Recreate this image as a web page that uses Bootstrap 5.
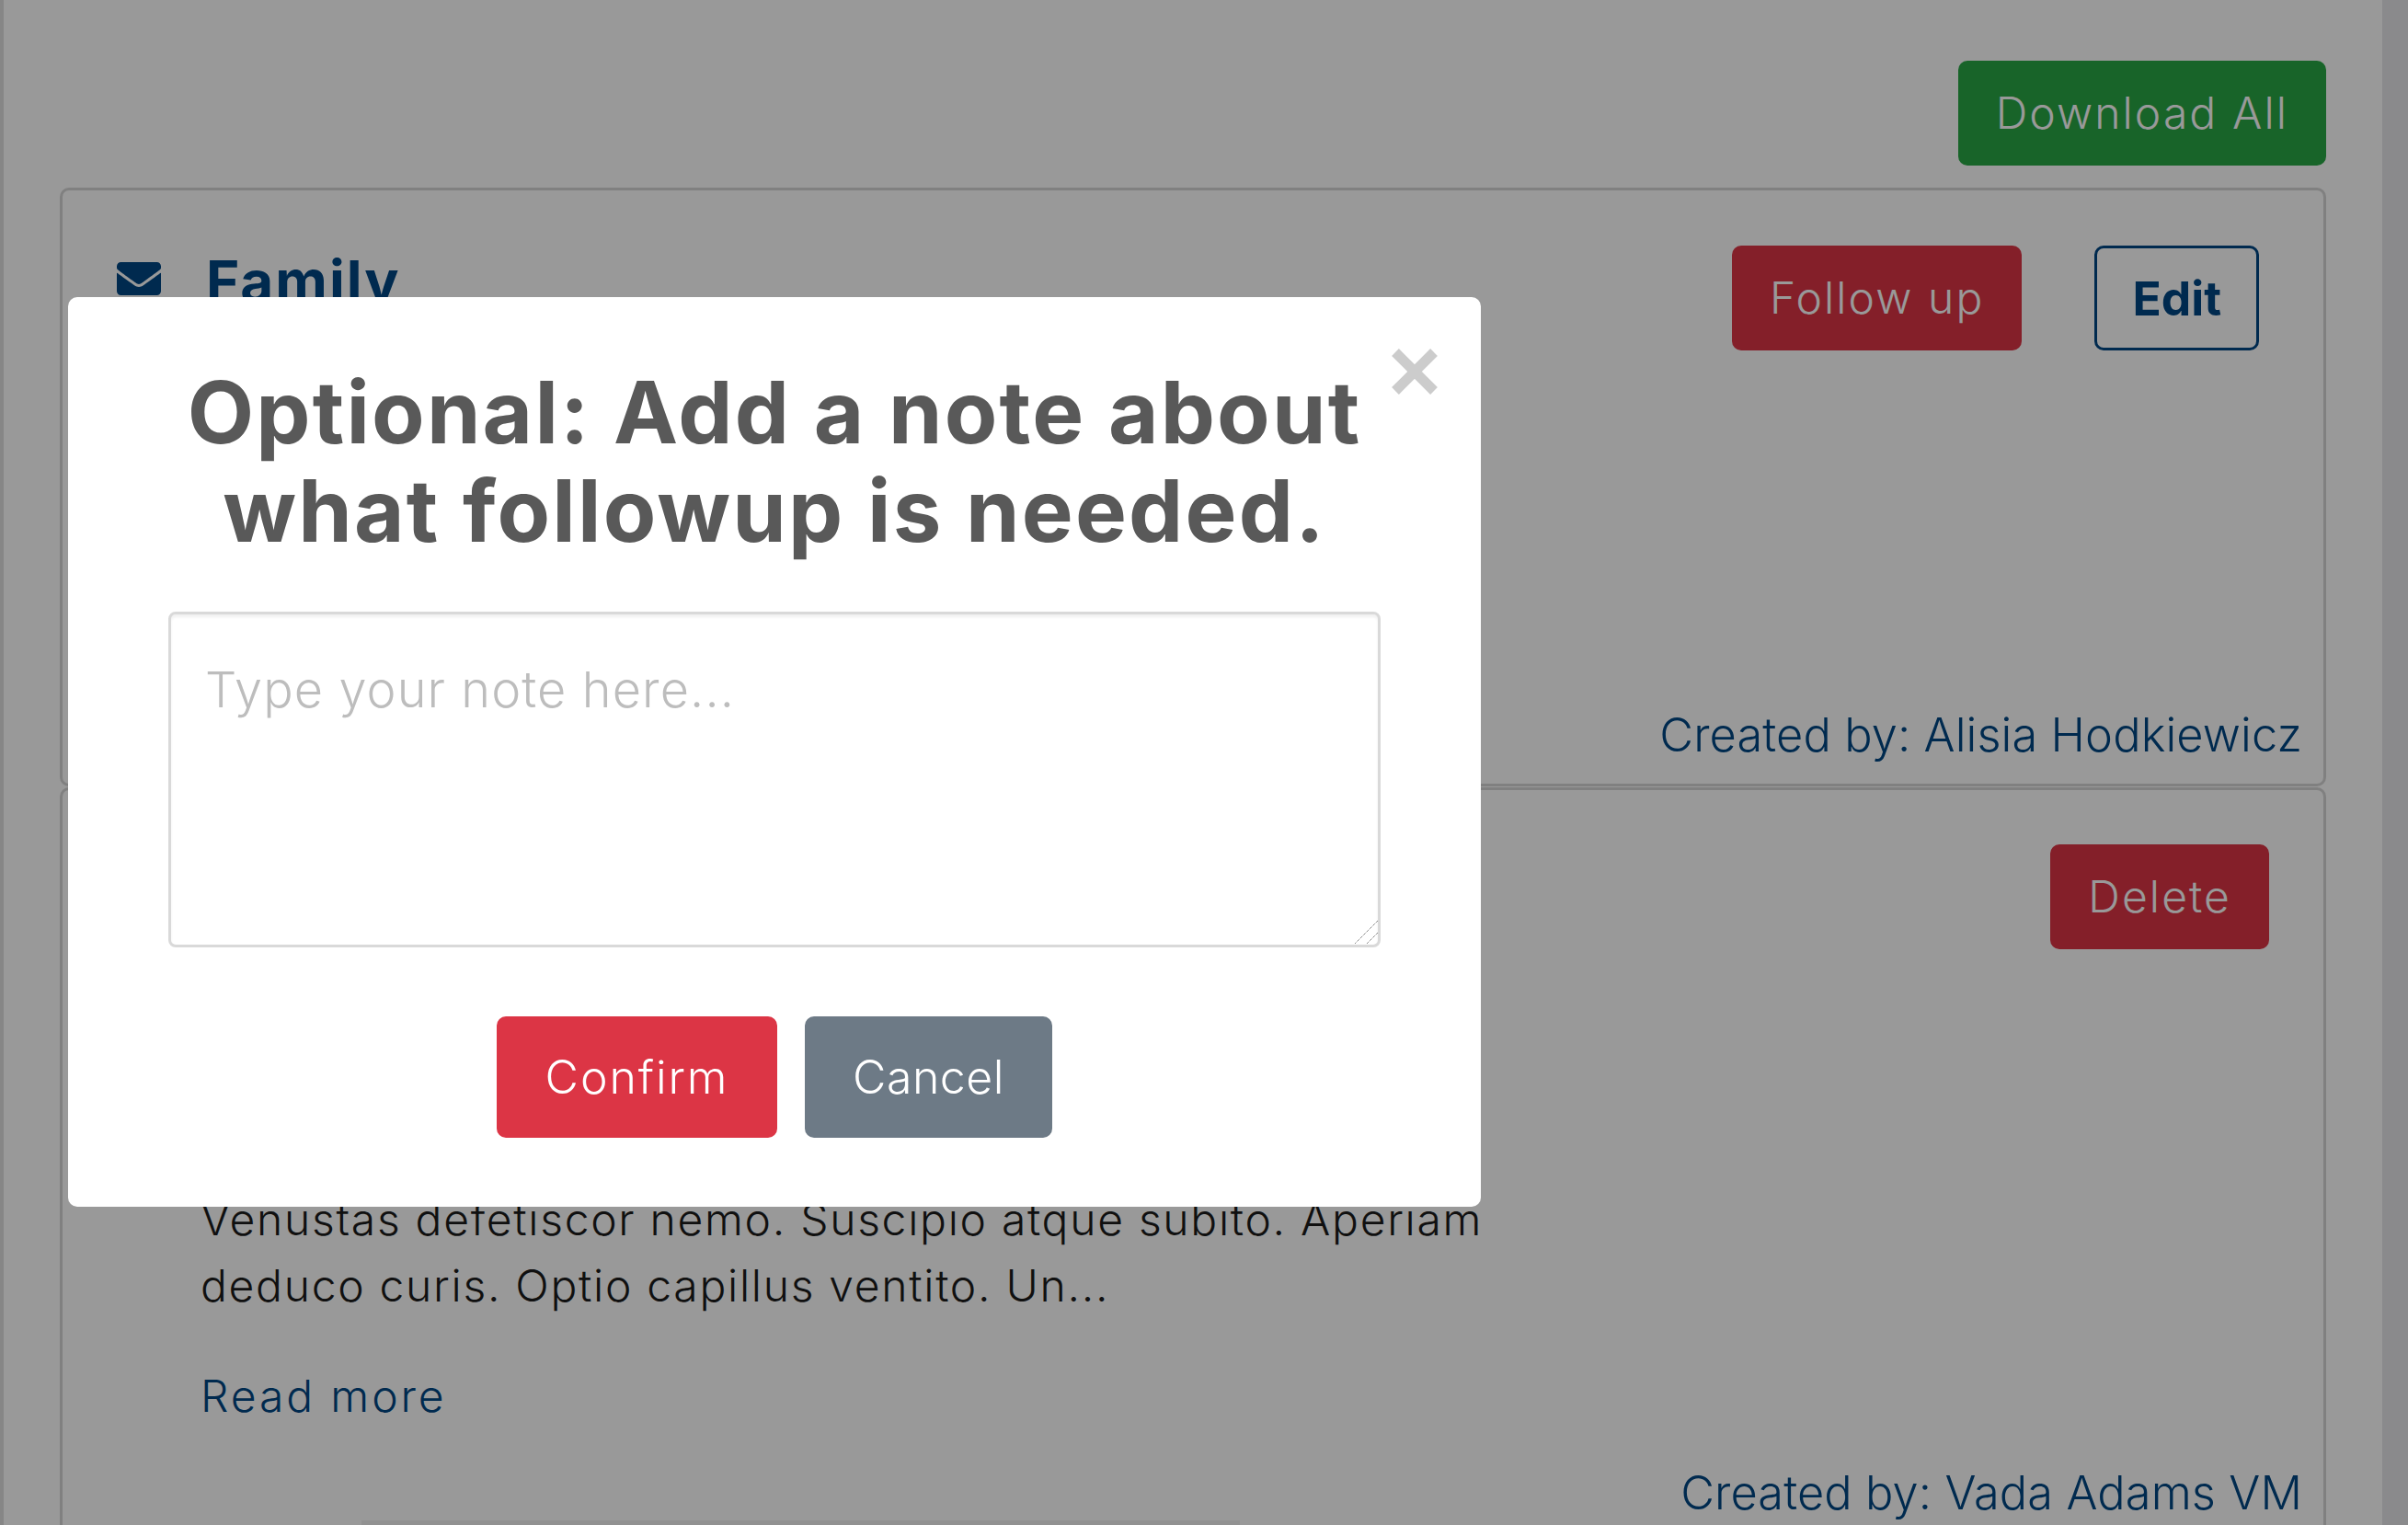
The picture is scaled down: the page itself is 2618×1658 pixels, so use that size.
<!DOCTYPE html>
<html lang="en"><head><meta charset="utf-8"><title>Note</title>
<link href="https://cdn.jsdelivr.net/npm/bootstrap@5.3.0/dist/css/bootstrap.min.css" rel="stylesheet">
<style>
html,body{height:100%;overflow:hidden}
body{font-family:Inter,"Liberation Sans",sans-serif;color:#1b1b1b;background:#fff;font-size:48px;line-height:72px;font-weight:300}
.page-shell{height:1658px;overflow:hidden;padding:66px 61px 0 61px;border-left:4px solid #e0e0e0;margin-right:28px}
.scroll-rail{position:fixed;top:0;right:0;bottom:0;width:28px;background:#e6e7e9}
.wide-btn{font-size:48px;line-height:60px;padding:27px 41px;border-radius:10px;border:0;letter-spacing:2.1px;font-weight:300}
.dl-btn{background:#28a745;color:#fff}
.del-btn{background:#dc3545;color:#fff}
.edit-btn{background:transparent;border:3px solid #004784;color:#004784;font-weight:700;font-size:51.5px;padding:24px 38px;letter-spacing:0}
.edit-btn:hover{color:#004784;border-color:#004784}
.note-card{border:3px solid #d6d6d6;border-radius:10px}
.card-one{margin-top:24px;height:651px;padding:60px 23px 23px 59px}
.card-two{margin-top:1px;height:900px;padding:59px 23px 0 59px}
.fam{font-size:62px;line-height:72px;color:#004784;font-weight:700;letter-spacing:2px;margin-top:3px}
.fam svg{width:48px;height:48px;fill:#004784;margin:-6px 49px 0 0}
.btn-pair{gap:79px;margin-right:47px}
.del-wrap{margin-right:36px}
.creator{color:#004784;font-size:50.5px;line-height:60px;text-align:right;font-weight:300;letter-spacing:.1px}
.excerpt{width:1420px;margin:258px 0 0 91px;letter-spacing:1.7px}
.excerpt a{color:#004784;text-decoration:none;display:block;margin-top:48px;letter-spacing:2.9px}
.card-two .creator{margin-top:39px}
.under-shade{height:6px;width:955px;margin-left:266px;background:rgba(0,0,0,.05)}
.dim-layer{position:fixed;inset:0;background:rgba(0,0,0,.4);z-index:10}
.note-dialog{position:fixed;left:74px;top:323px;width:1536px;height:989px;background:#fff;border-radius:10px;z-index:11;padding:72px 109px 0;text-align:center}
.note-dialog h2{font-size:94px;line-height:107px;font-weight:700;color:#595959;margin:0 0 56px;letter-spacing:2.2px}
.x-btn{position:absolute;left:1439px;top:56px;width:50px;height:50px;padding:0;border:0;background:none}
.x-btn svg{display:block;stroke:#ccc;stroke-width:11}
.note-input{display:block;height:365px;border:3px solid #d9d9d9;border-radius:8px;font-size:54px;line-height:72px;padding:46px 37px;box-shadow:inset 0 3px 3px rgba(0,0,0,.06);color:#333;resize:none;font-weight:300;letter-spacing:1.1px}
.note-input::placeholder{color:#bdbdbd}
.grip-mark{position:absolute;left:1398px;top:677px;width:28px;height:28px}
.grip-mark path{stroke:#555;stroke-width:1;stroke-dasharray:1 1;fill:none}
.act-row{margin-top:75px;gap:30px}
.act-btn{font-size:50px;line-height:60px;padding:36px 0;border-radius:10px;border:0;color:#fff;font-weight:300;letter-spacing:.5px}
.act-confirm{background:#dc3545;width:305px;letter-spacing:1.9px}
.act-cancel{background:#6d7a86;width:269px}
</style></head><body>
<div class="scroll-rail"></div>
<div class="page-shell">
 <div class="d-flex justify-content-end"><button class="btn wide-btn dl-btn">Download All</button></div>
 <div class="note-card card-one d-flex flex-column">
  <div class="d-flex justify-content-between align-items-start">
   <div class="fam d-flex align-items-center"><svg viewBox="0 0 512 512"><path d="M502.3 190.8c3.9-3.1 9.7-.2 9.7 4.7V400c0 26.5-21.5 48-48 48H48c-26.5 0-48-21.5-48-48V195.6c0-5 5.7-7.8 9.7-4.7 22.4 17.4 52.1 39.5 154.1 113.6 21.1 15.4 56.7 47.8 92.2 47.6 35.7.3 72-32.8 92.3-47.6 102-74.1 131.6-96.3 154-113.7zM256 320c23.2.4 56.6-29.2 73.4-41.4 132.7-96.3 142.8-104.7 173.4-128.7 5.8-4.5 9.2-11.5 9.2-18.9v-19c0-26.5-21.5-48-48-48H48C21.5 64 0 85.5 0 112v19c0 7.4 3.4 14.3 9.2 18.9 30.6 23.9 40.7 32.4 173.4 128.7 16.8 12.2 50.2 41.8 73.4 41.4z"/></svg>Family</div>
   <div class="d-flex btn-pair"><button class="btn wide-btn del-btn">Follow up</button><button class="btn wide-btn edit-btn">Edit</button></div>
  </div>
  <div class="creator mt-auto">Created by: Alisia Hodkiewicz</div>
 </div>
 <div class="note-card card-two">
  <div class="d-flex justify-content-end del-wrap"><button class="btn wide-btn del-btn">Delete</button></div>
  <div class="excerpt">Venustas defetiscor nemo. Suscipio atque subito. Aperiam deduco curis. Optio capillus ventito. Un...<a href="#">Read more</a></div>
  <div class="creator">Created by: Vada Adams VM</div>
  <div class="under-shade"></div>
 </div>
</div>
<div class="dim-layer"></div>
<div class="note-dialog">
 <button class="x-btn" aria-label="Close"><svg width="50" height="50" viewBox="0 0 50 50"><path d="M4 4 46 46M46 4 4 46"/></svg></button>
 <h2>Optional: Add a note about<br>what followup is needed.</h2>
 <textarea class="form-control note-input" placeholder="Type your note here..."></textarea>
 <svg class="grip-mark" viewBox="0 0 28 28"><path d="M26 1 1 26M26 14 14 26"/></svg>
 <div class="d-flex justify-content-center act-row"><button class="btn act-btn act-confirm">Confirm</button><button class="btn act-btn act-cancel">Cancel</button></div>
</div>
<script src="https://cdn.jsdelivr.net/npm/bootstrap@5.3.0/dist/js/bootstrap.bundle.min.js"></script>
</body></html>
